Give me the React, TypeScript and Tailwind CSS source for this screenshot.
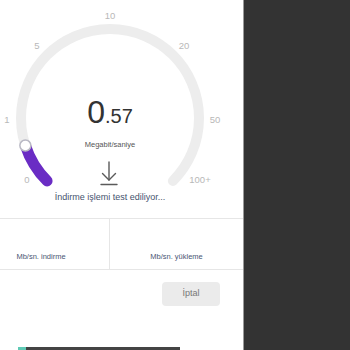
import React from "react";

const ticks = [
  { label: "10", x: 110, y: 16 },
  { label: "5", x: 37, y: 46 },
  { label: "20", x: 184, y: 46 },
  { label: "1", x: 7, y: 120 },
  { label: "50", x: 215, y: 120 },
  { label: "0", x: 27, y: 180 },
  { label: "100+", x: 200, y: 180 },
];

const Gauge: React.FC = () => (
  <div className="relative h-[218px] w-full">
    <svg width="243" height="218" className="absolute inset-0">
      <path
        d="M47.07 180.93 A89 89 0 1 1 172.93 180.93"
        fill="none"
        stroke="#ededed"
        strokeWidth="10"
        strokeLinecap="round"
      />
      <path
        d="M47.07 180.93 A89 89 0 0 1 25.36 145.5"
        fill="none"
        stroke="#6a2cc4"
        strokeWidth="11"
        strokeLinecap="round"
      />
      <circle cx="25.36" cy="145.5" r="5.5" fill="#fff" stroke="#b9b9c4" strokeWidth="1.5" />
      {ticks.map((t) => (
        <text
          key={t.label}
          x={t.x}
          y={t.y}
          textAnchor="middle"
          dominantBaseline="middle"
          fontSize="9.5"
          fill="#b8b8b8"
          fontFamily="Liberation Sans, Arial, sans-serif"
        >
          {t.label}
        </text>
      ))}
      {/* download arrow */}
      <g stroke="#5a5a5a" strokeWidth="1.4" fill="none" strokeLinecap="round">
        <path d="M109 162 V180" />
        <path d="M102.5 173.5 L109 180 L115.5 173.5" />
        <path d="M101 184.5 H117" />
      </g>
    </svg>
    <div className="absolute left-0 top-[96px] w-[220px] flex flex-col items-center">
      <div className="flex items-baseline text-[#333] leading-none">
        <span className="text-[32px]">0</span>
        <span className="text-[20px]">.57</span>
      </div>
      <div className="mt-[13px] text-[7.5px] text-[#555] leading-none">Megabit/saniye</div>
    </div>
    <div className="absolute left-0 top-[193px] w-[220px] text-center text-[9px] text-[#46536e] leading-none">
      İndirme işlemi test ediliyor...
    </div>
  </div>
);

export default function App() {
  return (
    <div
      className="flex w-[350px] h-[350px] overflow-hidden bg-[#333]"
      style={{ fontFamily: '"Liberation Sans", Arial, sans-serif' }}
    >
      <div className="w-[244px] h-full bg-white border-r border-[#9a9a9a] flex flex-col">
        <Gauge />
        <div className="flex h-[52px] border-y border-[#e6e6e6]">
          <div className="w-[110px] border-r border-[#e6e6e6] flex flex-col items-center justify-end pb-[9px] pr-[27px]">
            <span className="text-[7.5px] text-[#4a5674] leading-none">Mb/sn. indirme</span>
          </div>
          <div className="flex-1 flex flex-col items-center justify-end pb-[9px]">
            <span className="text-[7.5px] text-[#4a5674] leading-none">Mb/sn. yükleme</span>
          </div>
        </div>
        <div className="flex justify-end pr-[23px] pt-[12px]">
          <button className="w-[58px] h-[24px] rounded-[4px] bg-[#ebebeb] text-[9px] text-[#777]">
            İptal
          </button>
        </div>
        <div className="mt-auto ml-[18px] w-[162px] h-[3px] bg-[#444] flex">
          <div className="w-[8px] h-full bg-[#5fcab5]" />
        </div>
      </div>
      <div className="flex-1" />
    </div>
  );
}
